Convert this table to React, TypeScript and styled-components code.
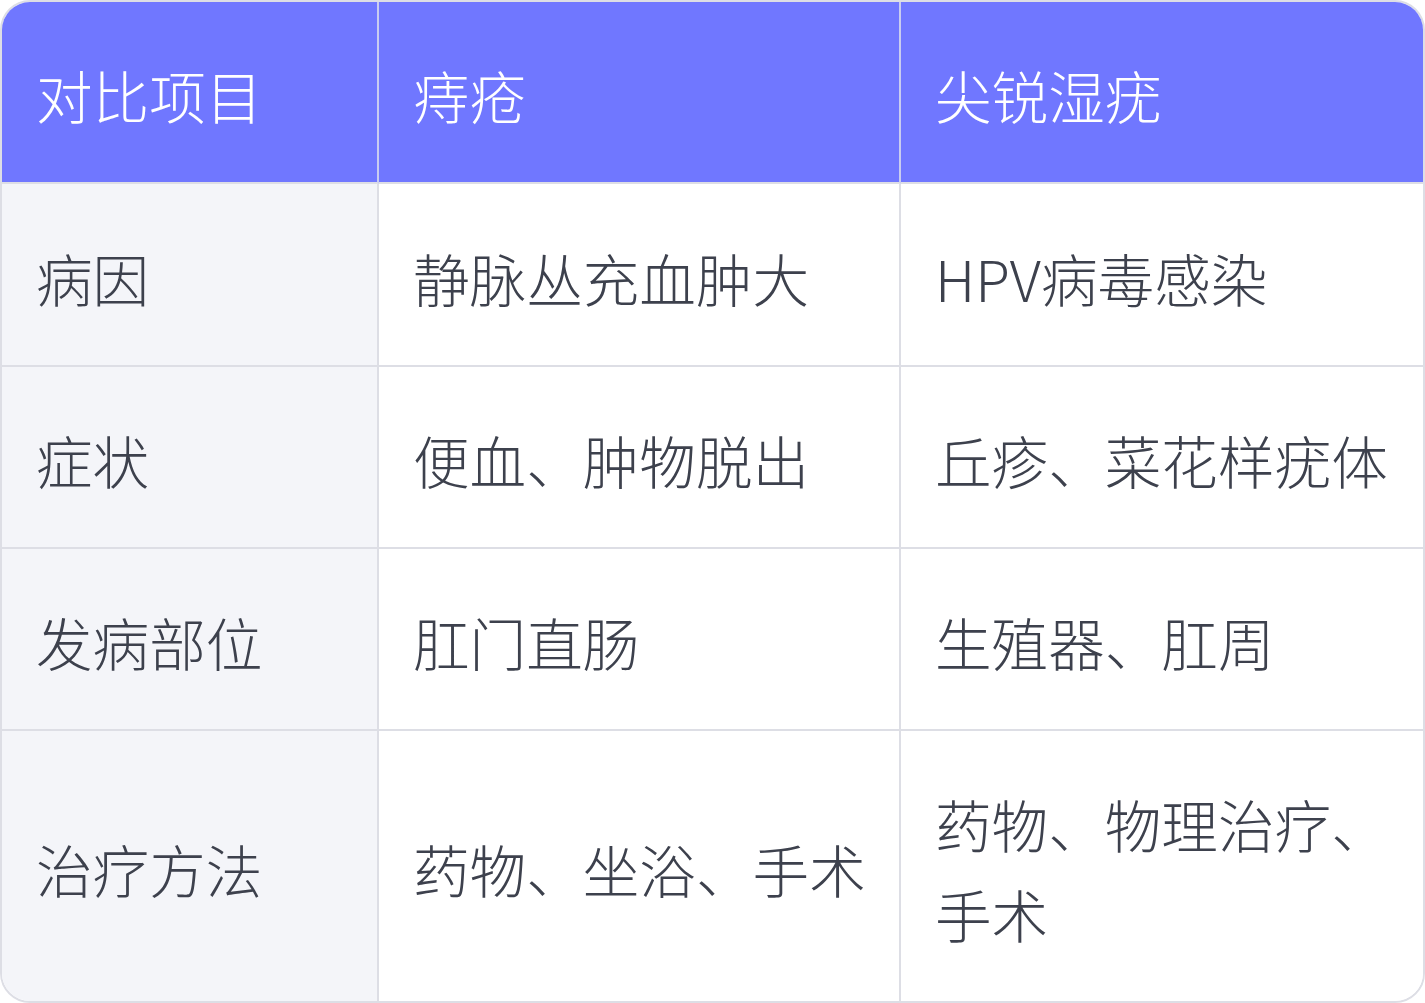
import React, { FC } from 'react'
import styled, { createGlobalStyle } from 'styled-components'

const GlobalStyle = createGlobalStyle`
    html, body { margin: 0; padding: 0; background: #ffffff; }
    body { font-family: "Noto Sans CJK SC Light", "Noto Sans CJK SC DemiLight", "Noto Sans CJK SC", "Noto Sans", sans-serif; }
`

const rows = [
    { label: '病因', hemorrhoid: '静脉丛充血肿大', wart: 'HPV病毒感染' },
    { label: '症状', hemorrhoid: '便血、肿物脱出', wart: '丘疹、菜花样疣体' },
    { label: '发病部位', hemorrhoid: '肛门直肠', wart: '生殖器、肛周' },
    { label: '治疗方法', hemorrhoid: '药物、坐浴、手术', wart: '药物、物理治疗、手术' },
]

const heads = ['对比项目', '痔疮', '尖锐湿疣']

const TableFrame = styled.div`
    width: 1425px;
    height: 1003px;
    box-sizing: border-box;
    border: 2px solid #dddee5;
    border-radius: 30px;
    overflow: hidden;
    display: grid;
    grid-template-columns: 377px 1fr 1fr;
    grid-template-rows: 182px 183px 182px 182px 1fr;
    background: #ffffff;
`

const Cell = styled.div<{ $head?: boolean; $label?: boolean; $lastCol?: boolean; $lastRow?: boolean }>`
    box-sizing: border-box;
    display: flex;
    align-items: center;
    padding: 6px 28px 0 34px;
    font-size: 56.6px;
    font-weight: 300;
    line-height: 1.59;
    color: ${p => (p.$head ? '#ffffff' : '#3d414d')};
    background: ${p => (p.$head ? '#7077ff' : p.$label ? '#f4f5f9' : '#ffffff')};
    border-right: ${p => (p.$lastCol ? 'none' : `2px solid ${p.$head ? '#c9ccf0' : '#dddee5'}`)};
    border-bottom: ${p => (p.$lastRow ? 'none' : '2px solid #dddee5')};
`

const App: FC = () => (
    <>
        <GlobalStyle />
        <TableFrame>
            {heads.map((h, i) => (
                <Cell key={h} $head $lastCol={i === heads.length - 1}>{h}</Cell>
            ))}
            {rows.map((r, i) => {
                const last = i === rows.length - 1
                return (
                    <React.Fragment key={r.label}>
                        <Cell $label $lastRow={last}>{r.label}</Cell>
                        <Cell $lastRow={last}>{r.hemorrhoid}</Cell>
                        <Cell $lastRow={last} $lastCol>{r.wart}</Cell>
                    </React.Fragment>
                )
            })}
        </TableFrame>
    </>
)

export default App
